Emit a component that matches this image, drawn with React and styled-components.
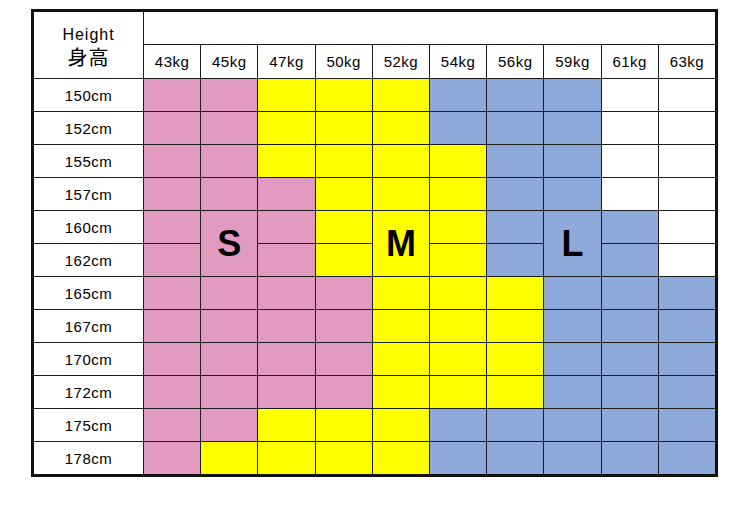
import { Fragment } from "react";
import styled, { createGlobalStyle } from "styled-components";

const GlobalStyle = createGlobalStyle`
  body {
    margin: 0;
    background: #fff;
    font-family: "Liberation Sans", Arial, "Noto Sans CJK JP", sans-serif;
    color: #000;
  }
`;

const Page = styled.div`
  padding: 9px 0 0 31px;
`;

const Chart = styled.div`
  width: 681px;
  display: grid;
  grid-template-columns: 109px repeat(10, 1fr);
  grid-template-rows: 32px 33px repeat(12, 32px);
  gap: 1px;
  background: #1c1c1c;
  border: 3px solid #111;
`;

const colors = {
  P: "#e09ac0",
  Y: "#ffff00",
  B: "#8eaadb",
  W: "#ffffff",
};

const Cell = styled.div`
  background: ${(p) => colors[p.$tone] || "#fff"};
  display: flex;
  align-items: center;
  justify-content: center;
  font-size: 15px;
  letter-spacing: 0.5px;
  grid-row: ${(p) => (p.$rows ? `span ${p.$rows}` : "auto")};
  grid-column: ${(p) => (p.$cols ? `span ${p.$cols}` : "auto")};
`;

const HeadCell = styled(Cell)`
  flex-direction: column;
  gap: 4px;
  padding-top: 4px;
  line-height: 1;
`;

const HeadEn = styled.span`
  font-size: 16px;
  letter-spacing: 1px;
`;

const HeadJa = styled.span`
  font-family: "Noto Sans CJK JP", sans-serif;
  font-size: 20px;
  letter-spacing: 1px;
  line-height: 1;
`;

const SizeMark = styled.span`
  font-size: 36px;
  font-weight: bold;
  letter-spacing: 0;
`;

const weights = ["43kg", "45kg", "47kg", "50kg", "52kg", "54kg", "56kg", "59kg", "61kg", "63kg"];

// one string per height row, one letter per weight column
const rows = [
  ["150cm", "PPYYYBBBWW"],
  ["152cm", "PPYYYBBBWW"],
  ["155cm", "PPYYYYBBWW"],
  ["157cm", "PPPYYYBBWW"],
  ["160cm", "PPPYYYBBBW"],
  ["162cm", "PPPYYYBBBW"],
  ["165cm", "PPPPYYYBBB"],
  ["167cm", "PPPPYYYBBB"],
  ["170cm", "PPPPYYYBBB"],
  ["172cm", "PPPPYYYBBB"],
  ["175cm", "PPYYYBBBBB"],
  ["178cm", "PYYYYBBBBB"],
];

// merged size labels: column index -> letter (rows 160cm + 162cm)
const marks = { 1: "S", 4: "M", 7: "L" };

const App = () => {
  return (
    <Page>
      <GlobalStyle />
      <Chart>
        <HeadCell $rows={2}>
          <HeadEn>Height</HeadEn>
          <HeadJa>身高</HeadJa>
        </HeadCell>
        <Cell $cols={10} />
        {weights.map((w) => (
          <Cell key={w}>{w}</Cell>
        ))}
        {rows.map(([height, tones]) => (
          <Fragment key={height}>
            <Cell>{height}</Cell>
            {tones.split("").map((t, c) => {
              if (marks[c] && height === "160cm") {
                return (
                  <Cell key={c} $tone={t} $rows={2}>
                    <SizeMark>{marks[c]}</SizeMark>
                  </Cell>
                );
              }
              if (marks[c] && height === "162cm") return null;
              return <Cell key={c} $tone={t} />;
            })}
          </Fragment>
        ))}
      </Chart>
    </Page>
  );
};

export default App;
